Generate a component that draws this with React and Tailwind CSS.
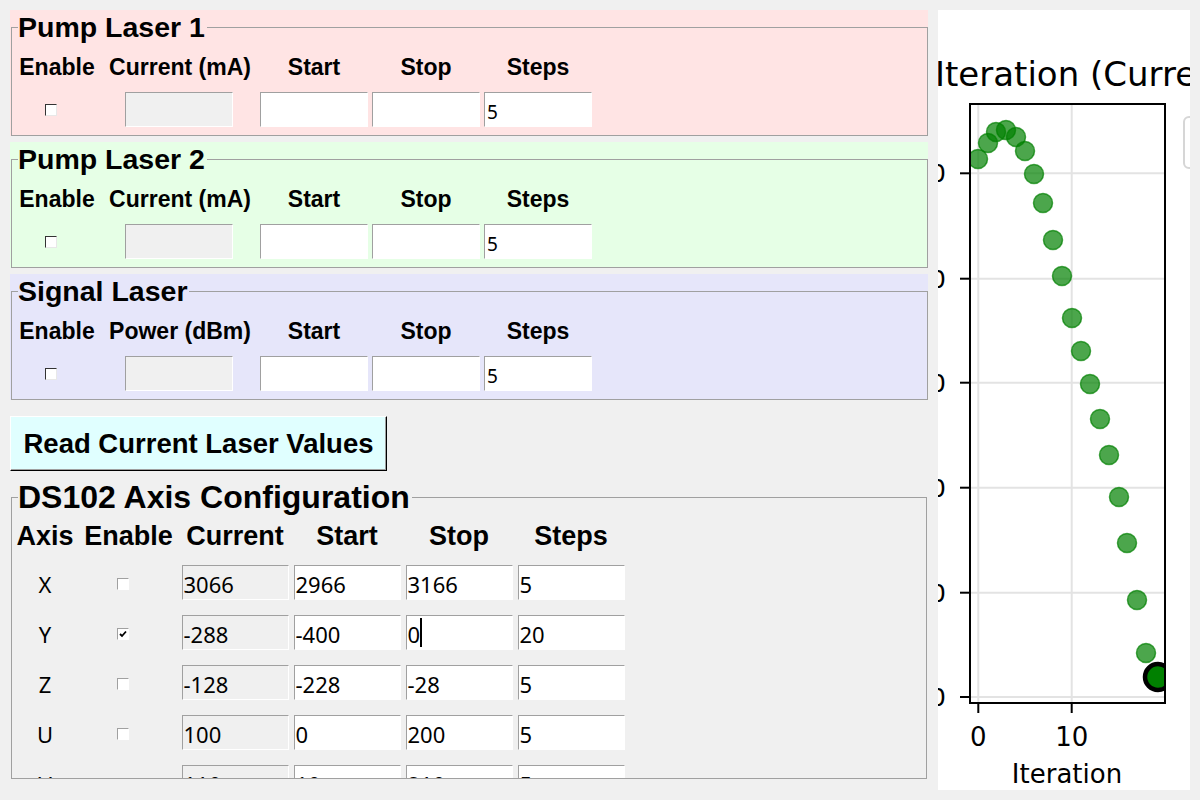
import React from 'react';

const headFont = { fontFamily: '"Liberation Sans", Arial, sans-serif' };
const entryFont = { fontFamily: '"Noto Sans", "Open Sans", sans-serif' };

const points = [
  [40, 149], [50, 133], [58, 122], [68, 120], [78, 127], [87, 141], [96, 164],
  [105, 193], [115, 230], [124, 266], [134, 308], [143, 341], [152, 374],
  [162, 409], [171, 445], [181, 487], [189, 533], [199, 590], [208, 643],
];

const Entry = ({ value = '', disabled = false, size = 'sm', cursor = false }) => (
  <div
    className={`flex items-center border border-t-[#a0a0a0] border-l-[#a0a0a0] border-r-white border-b-white ${
      disabled ? 'bg-[#f0f0f0]' : 'bg-white'
    } ${size === 'sm' ? 'w-[108px] h-[35px] pl-[2px] pt-[5px] text-[19px]' : 'w-[107px] h-[35px] pl-[1px] pt-[3px] text-[22px]'} font-normal text-black leading-none`}
    style={entryFont}
  >
    {value}
    {cursor && <span className="inline-block w-[2px] h-[29px] bg-black -mt-[3px]" />}
  </div>
);

const Check = ({ checked = false, dark = false }) => (
  <div
    className={`w-[12px] h-[12px] bg-white border flex items-center justify-center ${
      dark
        ? 'border-t-[#333] border-l-[#333] border-r-[#e8e8e8] border-b-[#e8e8e8]'
        : 'border-t-[#a0a0a0] border-l-[#a0a0a0] border-r-white border-b-white'
    }`}
  >
    {checked && (
      <svg width="8" height="8" viewBox="0 0 8 8">
        <polyline points="1,4 3,6 7,1.5" fill="none" stroke="black" strokeWidth="1.8" />
      </svg>
    )}
  </div>
);

const LaserFrame = ({ title, bg, valueLabel }) => (
  <div className={`${bg} pt-[3px] pl-[1px] w-[918px]`}>
    <fieldset className="border border-[#a0a0a0] w-[917px] pb-[8px]">
      <legend
        className="ml-[6px] pr-[2px] text-[28.5px] leading-[28px] font-bold text-black"
        style={headFont}
      >
        {title}
      </legend>
      <div
        className="grid grid-cols-[90px_156px_112px_112px_112px] pt-[11px] text-[23px] leading-[30px] font-bold text-black"
        style={headFont}
      >
        <div className="text-center">Enable</div>
        <div className="text-center">{valueLabel}</div>
        <div className="text-center">Start</div>
        <div className="text-center">Stop</div>
        <div className="text-center">Steps</div>
        <div className="mt-[10px] h-[35px] flex items-center pl-[33px]">
          <Check dark />
        </div>
        <div className="mt-[10px] flex justify-center pr-[2px]">
          <Entry disabled />
        </div>
        <div className="mt-[10px] flex justify-center">
          <Entry />
        </div>
        <div className="mt-[10px] flex justify-center">
          <Entry />
        </div>
        <div className="mt-[10px] flex justify-center">
          <Entry value="5" />
        </div>
      </div>
    </fieldset>
  </div>
);

const axes = [
  { name: 'X', on: false, cur: '3066', start: '2966', stop: '3166', steps: '5' },
  { name: 'Y', on: true, cur: '-288', start: '-400', stop: '0', steps: '20', cursor: true },
  { name: 'Z', on: false, cur: '-128', start: '-228', stop: '-28', steps: '5' },
  { name: 'U', on: false, cur: '100', start: '0', stop: '200', steps: '5' },
  { name: 'V', on: false, cur: '110', start: '10', stop: '210', steps: '5' },
];

const AxisFrame = () => (
  <fieldset className="border border-[#a0a0a0] ml-[1px] w-[916px] mt-[11px]">
    <legend
      className="ml-[6px] pr-[2px] text-[32px] leading-[30px] font-bold text-black"
      style={headFont}
    >
      DS102 Axis Configuration
    </legend>
    <div className="h-[266px] overflow-hidden pt-[8px]">
      <div
        className="grid grid-cols-[66px_101px_112px_112px_112px_112px] text-[27px] leading-[32px] font-bold text-black"
        style={headFont}
      >
        <div className="text-center">Axis</div>
        <div className="text-center">Enable</div>
        <div className="text-center">Current</div>
        <div className="text-center">Start</div>
        <div className="text-center">Stop</div>
        <div className="text-center">Steps</div>
      </div>
      <div className="flex flex-col gap-[15px] mt-[13px]">
        {axes.map((a) => (
          <div key={a.name} className="grid grid-cols-[66px_101px_112px_112px_112px_112px] h-[35px]">
            <div className="flex items-center justify-center text-[22px] pt-[3px]" style={entryFont}>
              {a.name}
            </div>
            <div className="flex items-center pl-[39px] pt-[1px]">
              <Check checked={a.on} />
            </div>
            <div className="flex justify-center">
              <Entry value={a.cur} disabled size="lg" />
            </div>
            <div className="flex justify-center">
              <Entry value={a.start} size="lg" />
            </div>
            <div className="flex justify-center">
              <Entry value={a.stop} size="lg" cursor={a.cursor} />
            </div>
            <div className="flex justify-center">
              <Entry value={a.steps} size="lg" />
            </div>
          </div>
        ))}
      </div>
    </div>
  </fieldset>
);

const Chart = () => {
  const yTicks = [163.3, 268.7, 372.7, 477.7, 582.7, 687];
  const labelFont = { fontFamily: '"DejaVu Sans", sans-serif' };
  return (
    <svg width="252" height="780" viewBox="0 0 252 780" className="block">
      <defs>
        <clipPath id="axesClip">
          <rect x="32" y="94" width="195" height="599" />
        </clipPath>
      </defs>
      <text x="-3" y="76" fontSize="34" fill="black" style={labelFont}>
        Iteration (Current)
      </text>
      {yTicks.map((y) => (
        <g key={y}>
          <line x1="32" x2="227" y1={y} y2={y} stroke="#e3e3e3" strokeWidth="2" />
          <line x1="22" x2="32" y1={y} y2={y} stroke="black" strokeWidth="2" />
          <text x="8" y={y + 9} fontSize="25" textAnchor="end" fill="black" style={labelFont}>
            00
          </text>
        </g>
      ))}
      {[40.3, 133.7].map((x) => (
        <g key={x}>
          <line x1={x} x2={x} y1="94" y2="693" stroke="#e3e3e3" strokeWidth="2" />
          <line x1={x} x2={x} y1="693" y2="703" stroke="black" strokeWidth="2" />
        </g>
      ))}
      <text x="40.3" y="736" fontSize="26" textAnchor="middle" style={labelFont}>0</text>
      <text x="133.7" y="736" fontSize="26" textAnchor="middle" style={labelFont}>10</text>
      <text x="129" y="773" fontSize="26" textAnchor="middle" style={labelFont}>Iteration</text>
      <g clipPath="url(#axesClip)">
        {points.map(([x, y], i) => (
          <circle
            key={i}
            cx={x}
            cy={y}
            r="9.5"
            fill="green"
            fillOpacity="0.7"
            stroke="green"
            strokeOpacity="0.7"
            strokeWidth="1.5"
          />
        ))}
        <circle cx="220" cy="667" r="13" fill="#008000" stroke="black" strokeWidth="4.5" />
      </g>
      <rect x="32" y="94" width="195" height="599" fill="none" stroke="black" strokeWidth="2" />
      <rect x="246" y="107" width="20" height="51" rx="5" fill="white" stroke="#d6d6d6" strokeWidth="2" />
    </svg>
  );
};

const App = () => {
  return (
    <div className="w-[1200px] h-[800px] bg-[#f0f0f0] overflow-hidden flex pt-[10px] pl-[10px]">
      <div className="w-[918px] flex flex-col">
        <LaserFrame title="Pump Laser 1" bg="bg-[#ffe4e4]" valueLabel="Current (mA)" />
        <div className="h-[6px]" />
        <LaserFrame title="Pump Laser 2" bg="bg-[#e6ffe6]" valueLabel="Current (mA)" />
        <div className="h-[6px]" />
        <LaserFrame title="Signal Laser" bg="bg-[#e6e6fa]" valueLabel="Power (dBm)" />
        <button
          className="mt-[16px] w-[377px] h-[55px] bg-[#e0ffff] border border-t-white border-l-white border-r-black border-b-black shadow-[inset_-1px_-1px_0_#a0a0a0] text-[27.5px] font-bold text-black"
          style={headFont}
        >
          Read Current Laser Values
        </button>
        <AxisFrame />
      </div>
      <div className="ml-[10px] w-[252px] h-[780px] bg-white overflow-hidden">
        <Chart />
      </div>
    </div>
  );
};

export default App;
